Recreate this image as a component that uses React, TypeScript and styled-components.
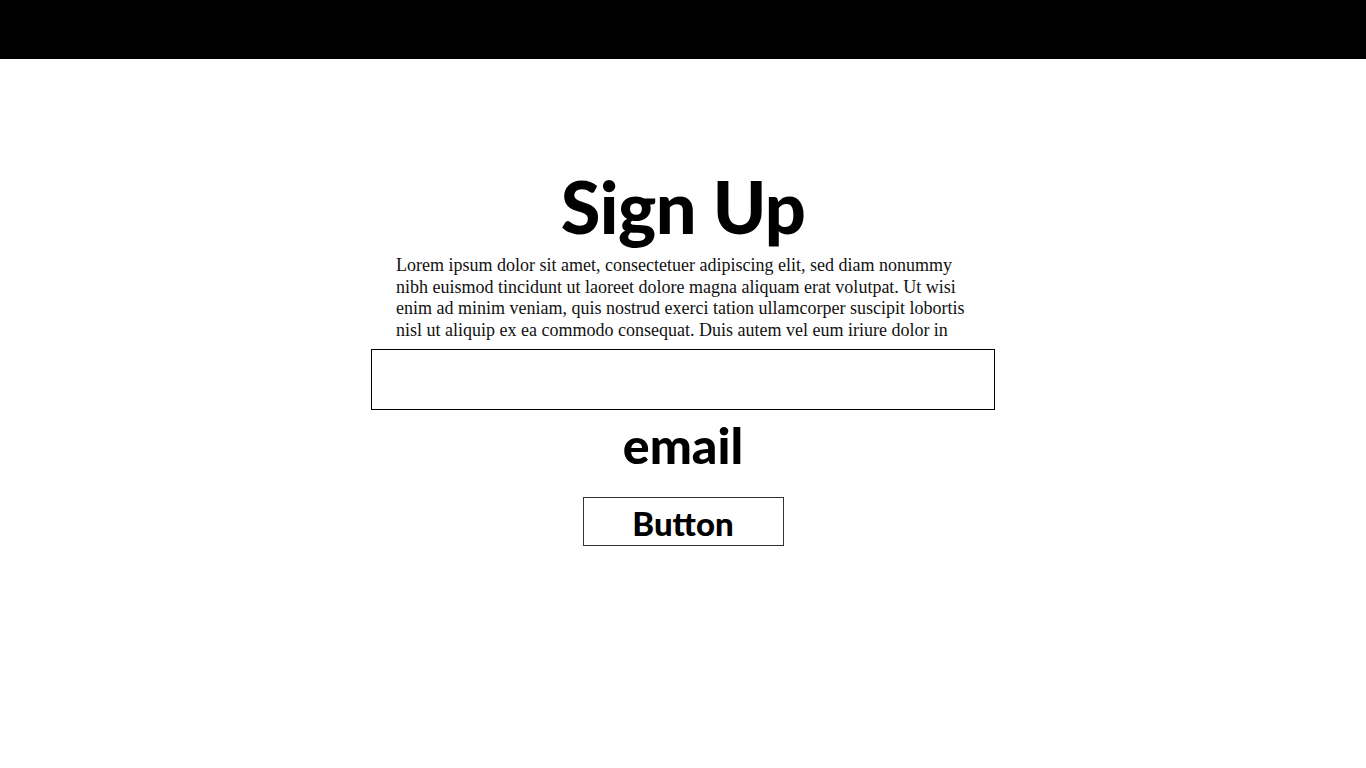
import styled, { createGlobalStyle } from 'styled-components'

const GlobalStyle = createGlobalStyle`
  html, body {
    margin: 0;
    padding: 0;
    background: #ffffff;
  }
  * {
    box-sizing: border-box;
  }
`

const TopBar = styled.header`
  height: 59px;
  background: #000000;
`

const Main = styled.main`
  display: flex;
  flex-direction: column;
  align-items: center;
  padding-top: 106px;
`

const Title = styled.h1`
  margin: 0;
  font-family: Lato, 'Open Sans', sans-serif;
  font-weight: 900;
  font-size: 72px;
  line-height: 82px;
  color: #000;
  letter-spacing: -0.5px;
`

const Intro = styled.p`
  margin: 8px 0 0;
  width: 574px;
  font-family: 'Liberation Serif', 'Times New Roman', serif;
  font-size: 18px;
  line-height: 21.5px;
  color: #111;
`

const Line = styled.span`
  display: block;
  white-space: nowrap;
`

const Field = styled.input`
  margin-top: 8px;
  width: 624px;
  height: 61px;
  border: 1px solid #000;
  border-radius: 0;
  background: #fff;
  padding: 0 12px;
  font-size: 20px;
  outline: none;
`

const FieldLabel = styled.label`
  margin-top: 6px;
  font-family: Lato, 'Open Sans', sans-serif;
  font-weight: 900;
  font-size: 50px;
  line-height: 58px;
  color: #000;
`

const ActionButton = styled.button`
  margin-top: 23px;
  width: 201px;
  height: 49px;
  border: 1px solid #333;
  background: #fff;
  font-family: Lato, 'Open Sans', sans-serif;
  font-weight: 900;
  font-size: 33px;
  line-height: 1;
  color: #000;
  cursor: pointer;
  padding: 4px 0 0;
`

const introLines = [
  'Lorem ipsum dolor sit amet, consectetuer adipiscing elit, sed diam nonummy',
  'nibh euismod tincidunt ut laoreet dolore magna aliquam erat volutpat. Ut wisi',
  'enim ad minim veniam, quis nostrud exerci tation ullamcorper suscipit lobortis',
  'nisl ut aliquip ex ea commodo consequat. Duis autem vel eum iriure dolor in',
]

export default function App() {
  return (
    <>
      <GlobalStyle />
      <TopBar />
      <Main>
        <Title>Sign Up</Title>
        <Intro>
          {introLines.map(line => (
            <Line key={line}>{line}</Line>
          ))}
        </Intro>
        <Field id="email" type="email" />
        <FieldLabel htmlFor="email">email</FieldLabel>
        <ActionButton type="button">Button</ActionButton>
      </Main>
    </>
  )
}
